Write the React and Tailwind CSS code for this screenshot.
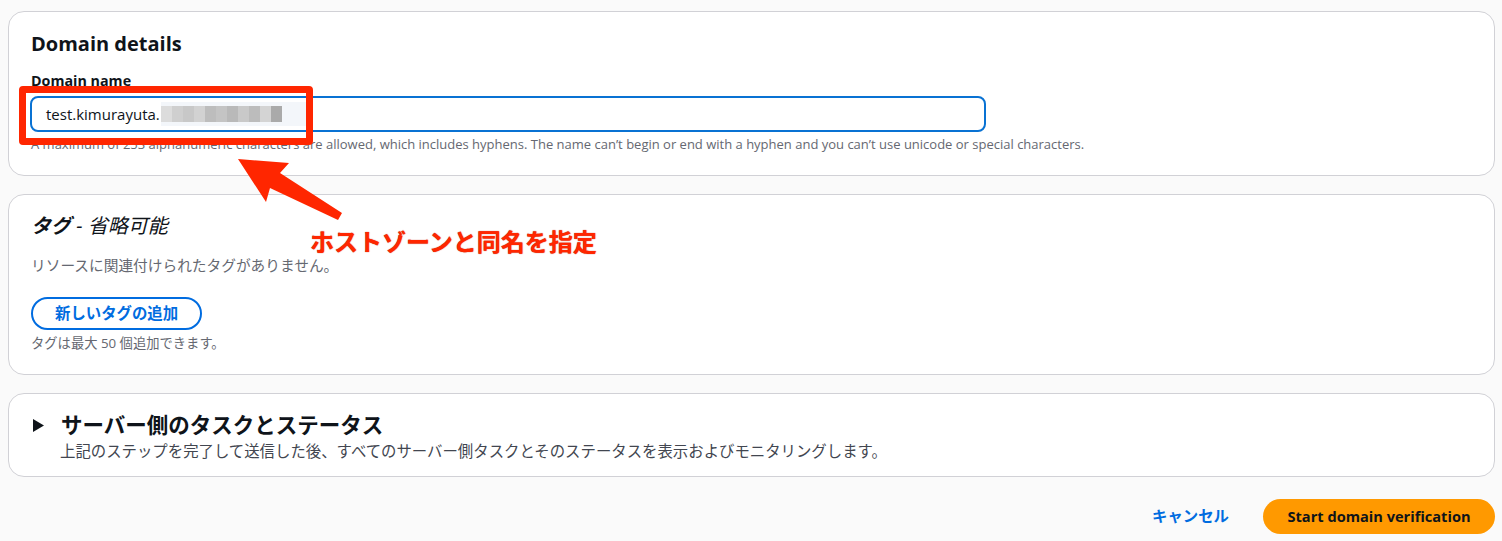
import React from 'react';

const font = { fontFamily: '"Open Sans", "Noto Sans CJK JP", sans-serif' };

// pixelated blur over the hidden part of the domain
const blurCells = ['#dcdcdc', '#cfcfcf', '#c8c8c8', '#d2d2d2', '#bdbdbd', '#c4c4c4', '#b9b9b9', '#c9c9c9', '#bcbcbc', '#d4d4d4', '#aaaaaa'];

const Card = ({ className = '', children }) => (
  <section className={`rounded-2xl border border-[#d1d1d6] bg-white ${className}`}>{children}</section>
);

export default function App() {
  return (
    <div className="relative min-h-[541px] bg-[#fafafa] pl-[8px] pr-[7px] pt-[11px] text-[#0f141a]" style={font}>
      {/* Domain details */}
      <Card className="px-[21px] pt-[20px] pb-[23px]">
        <h2 className="pl-[1px] text-[20px] font-bold leading-6">Domain details</h2>
        <div className="mt-[15px] pl-[1px] text-[14.3px] font-bold leading-5">Domain name</div>
        <div className="mt-[5px] flex h-[36px] w-[956px] items-center rounded-lg border-2 border-[#0972d3] bg-white pl-[14px] text-[15px]">
          <span>test.kimurayuta.</span>
          <span className="ml-[1px] flex h-[24px] w-[146px] items-center bg-[#f3f6fa]">
            <span className="flex blur-[0.6px]">
              {blurCells.map((c, i) => (
                <span key={i} className="h-[16px] w-[11px]" style={{ background: c }} />
              ))}
            </span>
          </span>
        </div>
        <p className="mt-[4px] pl-[1px] text-[13px] leading-4 text-[#656871]">
          A maximum of 253 alphanumeric characters are allowed, which includes hyphens. The name can’t begin or end with a hyphen and you can’t use unicode or special characters.
        </p>
      </Card>

      {/* Tags */}
      <Card className="mt-[18px] px-[22px] pt-[19px] pb-[23px]">
        <h2 className="text-[20px] leading-6 italic">
          <span className="font-bold">タグ</span> - 省略可能
        </h2>
        <p className="mt-[17px] text-[14.7px] leading-5 text-[#656871]">リソースに関連付けられたタグがありません。</p>
        <button className="mt-[22px] h-[33px] rounded-full border-2 border-[#006ce0] px-[22px] text-[15.4px] font-bold leading-5 text-[#006ce0]">
          新しいタグの追加
        </button>
        <p className="mt-[5px] text-[13.3px] leading-4 text-[#656871]">タグは最大 50 個追加できます。</p>
      </Card>

      {/* Server side tasks */}
      <Card className="mt-[18px] pl-[24px] pr-[22px] pt-[19px] pb-[14px]">
        <div className="flex items-center gap-[17px]">
          <svg width="11" height="13" viewBox="0 0 11 13">
            <path d="M0 0 L11 6.5 L0 13 Z" fill="#0f141a" />
          </svg>
          <h2 className="text-[21.5px] font-bold leading-6">サーバー側のタスクとステータス</h2>
        </div>
        <p className="mt-[5px] pl-[27px] text-[15.4px] leading-5 text-[#424650]">
          上記のステップを完了して送信した後、すべてのサーバー側タスクとそのステータスを表示およびモニタリングします。
        </p>
      </Card>

      {/* Footer */}
      <div className="mt-[22px] flex items-center justify-end gap-[18px]">
        <button className="px-[16px] text-[15.4px] font-bold text-[#006ce0]">キャンセル</button>
        <button className="h-[35px] w-[232px] rounded-full bg-[#ff9900] text-[14.6px] font-bold text-[#0f141a]">
          Start domain verification
        </button>
      </div>

      {/* annotation overlay */}
      <div className="pointer-events-none absolute left-[19px] top-[86px] h-[59px] w-[294px] rounded-[4px] border-[7px] border-[#ff2600]" />
      <svg className="pointer-events-none absolute left-0 top-0" width="400" height="240">
        <path d="M238 159 L289 163 L280 173 L342 213 L338 220 L270 188 L266 202 Z" fill="#ff2600" />
      </svg>
      <div
        className="pointer-events-none absolute left-[310px] top-[227px] text-[24px] font-bold leading-7 text-[#ff2600]"
        style={{ fontFamily: '"Noto Sans CJK JP", sans-serif', textShadow: '0 0 1px #b31a00' }}
      >
        ホストゾーンと同名を指定
      </div>
    </div>
  );
}
